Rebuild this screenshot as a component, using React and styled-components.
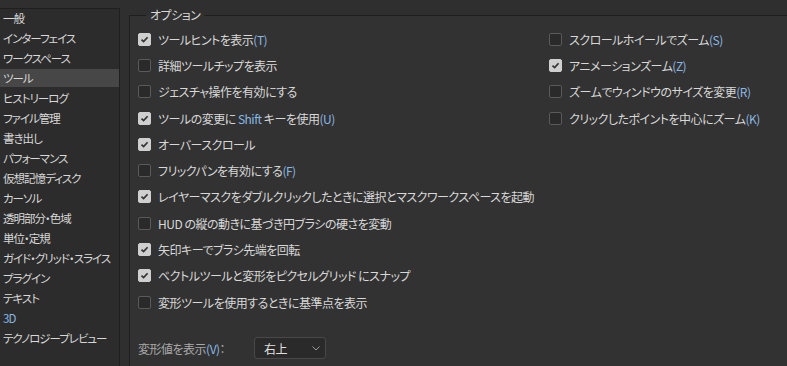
import React from "react";
import styled, { createGlobalStyle } from "styled-components";

const Global = createGlobalStyle`
  html, body { margin: 0; padding: 0; background: #2f2f2f; }
  body {
    font-family: "Noto Sans CJK JP", "Noto Sans", sans-serif;
    font-size: 12px;
    color: #d8d8d8;
    font-feature-settings: "palt";
  }
`;

const Page = styled.div`
  display: flex;
  width: 787px;
  height: 366px;
  overflow: hidden;
  background: #2f2f2f;
`;

const Sidebar = styled.ul`
  list-style: none;
  margin: 8px 0 0 0;
  padding: 0;
  width: 119px;
  flex: none;
  background: #2c2c2c;
  border-top: 1px solid #1f1f1f;
  border-right: 1px solid #1f1f1f;
`;

const NavItem = styled.li`
  height: 20px;
  line-height: 19px;
  padding-left: 3px;
  font-size: 11.5px;
  letter-spacing: -1px;
  white-space: nowrap;
  color: ${(p) => (p.$accent ? "#8ab8e6" : "#d8d8d8")};
  background: ${(p) =>
    p.$active ? "linear-gradient(#474747 0 18px, transparent 18px)" : "transparent"};
`;

const Main = styled.div`
  flex: 1;
  padding-left: 9px;
  min-width: 0;
`;

const Group = styled.fieldset`
  margin: 7px 0 0 0;
  padding: 3px 0 0 8px;
  height: 370px;
  box-sizing: border-box;
  border: none;
  border-top: 1px solid #1f1f1f;
  border-left: 1px solid #1f1f1f;
  background: #323232;
  letter-spacing: -0.5px;
`;

const Legend = styled.legend`
  margin-left: 8px;
  padding: 0 4px;
  line-height: 16px;
  color: #d8d8d8;
`;

const Columns = styled.div`
  display: grid;
  grid-template-columns: 411px 1fr;
`;

const Column = styled.div`
  display: flex;
  flex-direction: column;
`;

const Row = styled.label`
  display: flex;
  align-items: center;
  gap: 7px;
  height: 26.3px;
  white-space: nowrap;
  color: #d8d8d8;
`;

const Box = styled.span`
  width: 11px;
  height: 11px;
  flex: none;
  border: 1px solid ${(p) => (p.$checked ? "#cfcfcf" : "#5a5a5a")};
  border-radius: 2px;
  background: ${(p) => (p.$checked ? "#cfcfcf" : "#2a2a2a")};
  display: flex;
  align-items: center;
  justify-content: center;
`;

const Key = styled.span`
  color: #8ab8e6;
`;

const Footer = styled.div`
  display: flex;
  align-items: center;
  margin-top: 22px;
`;

const FooterLabel = styled.span`
  width: 116px;
  flex: none;
  color: #a8a8a8;
`;

const Select = styled.div`
  box-sizing: border-box;
  width: 72px;
  height: 22px;
  border: 1px solid #484848;
  border-radius: 3px;
  background: #2a2a2a;
  display: flex;
  align-items: center;
  justify-content: space-between;
  padding: 0 5px 0 9px;
  color: #e0e0e0;
`;

const Check = ({ checked }) => (
  <Box $checked={checked}>
    {checked && (
      <svg width="9" height="9" viewBox="0 0 9 9">
        <path d="M1.5 4.6 L3.6 6.6 L7.6 2.2" fill="none" stroke="#333" strokeWidth="1.7" />
      </svg>
    )}
  </Box>
);

const Option = ({ checked, children }) => (
  <Row>
    <Check checked={checked} />
    <span>{children}</span>
  </Row>
);

const navItems = [
  "一般",
  "インターフェイス",
  "ワークスペース",
  "ツール",
  "ヒストリーログ",
  "ファイル管理",
  "書き出し",
  "パフォーマンス",
  "仮想記憶ディスク",
  "カーソル",
  "透明部分・色域",
  "単位・定規",
  "ガイド・グリッド・スライス",
  "プラグイン",
  "テキスト",
  "3D",
  "テクノロジープレビュー",
];

export default function App() {
  return (
    <>
      <Global />
      <Page>
        <Sidebar>
          {navItems.map((n) => (
            <NavItem key={n} $active={n === "ツール"} $accent={n === "3D"}>
              {n}
            </NavItem>
          ))}
        </Sidebar>
        <Main>
          <Group>
            <Legend>オプション</Legend>
            <Columns>
              <Column>
                <Option checked>ツールヒントを表示<Key>(T)</Key></Option>
                <Option>詳細ツールチップを表示</Option>
                <Option>ジェスチャ操作を有効にする</Option>
                <Option checked>ツールの変更に <Key>Shift</Key> キーを使用<Key>(U)</Key></Option>
                <Option checked>オーバースクロール</Option>
                <Option>フリックパンを有効にする<Key>(F)</Key></Option>
                <Option checked>レイヤーマスクをダブルクリックしたときに選択とマスクワークスペースを起動</Option>
                <Option>HUD の縦の動きに基づき円ブラシの硬さを変動</Option>
                <Option checked>矢印キーでブラシ先端を回転</Option>
                <Option checked>ベクトルツールと変形をピクセルグリッド にスナップ</Option>
                <Option>変形ツールを使用するときに基準点を表示</Option>
              </Column>
              <Column>
                <Option>スクロールホイールでズーム<Key>(S)</Key></Option>
                <Option checked>アニメーションズーム<Key>(Z)</Key></Option>
                <Option>ズームでウィンドウのサイズを変更<Key>(R)</Key></Option>
                <Option>クリックしたポイントを中心にズーム<Key>(K)</Key></Option>
              </Column>
            </Columns>
            <Footer>
              <FooterLabel>変形値を表示<Key>(V)</Key>：</FooterLabel>
              <Select>
                <span>右上</span>
                <svg width="8" height="5" viewBox="0 0 8 5">
                  <path d="M0.5 0.5 L4 4 L7.5 0.5" fill="none" stroke="#9a9a9a" strokeWidth="1" />
                </svg>
              </Select>
            </Footer>
          </Group>
        </Main>
      </Page>
    </>
  );
}
